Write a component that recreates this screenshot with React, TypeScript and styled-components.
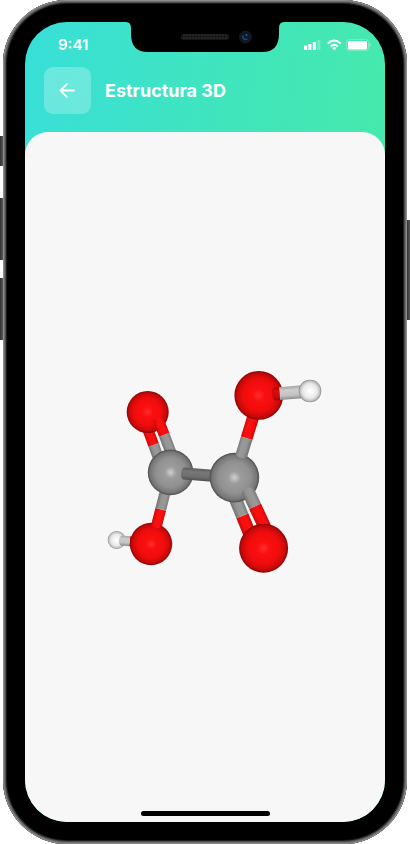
import React from "react";
import styled, { createGlobalStyle } from "styled-components";

const GlobalStyle = createGlobalStyle`
  * { box-sizing: border-box; }
  body { margin: 0; background: #ffffff; }
`;

const Page = styled.div`
  min-height: 100vh;
  padding: 0 3px;
  display: flex;
  font-family: Inter, "Open Sans", sans-serif;
`;

const Phone = styled.div`
  position: relative;
  flex: 1;
  display: flex;
  padding: 22px;
  border-radius: 64px;
  background: #000000;
  box-shadow:
    inset 0 0 0 1px #8c8c8c,
    inset 0 0 0 2px #6e6e6e,
    inset 0 0 0 3px #4c4c4c,
    inset 0 0 0 4px #1e1e1e;
`;

const SideKey = styled.span<{ $side: "left" | "right"; $top: number; $length: number }>`
  position: absolute;
  ${(p) => p.$side}: -3px;
  top: ${(p) => p.$top}px;
  width: 3px;
  height: ${(p) => p.$length}px;
  background: linear-gradient(90deg, #303030, #5c5c5c);
`;

const Screen = styled.div`
  position: relative;
  flex: 1;
  display: flex;
  flex-direction: column;
  overflow: hidden;
  border-radius: 42px;
  background: linear-gradient(97deg, #38dfd8 0%, #40e5bd 45%, #49eba4 100%);
`;

const Notch = styled.svg`
  position: absolute;
  top: 0;
  left: 50%;
  width: 158px;
  height: 30px;
  transform: translateX(-50%);
`;

const StatusBar = styled.div`
  height: 45px;
  padding: 0 14px 0 33px;
  display: flex;
  align-items: center;
  justify-content: space-between;
  color: #ffffff;
`;

const Clock = styled.time`
  font-size: 15px;
  line-height: 19px;
  font-weight: 600;
`;

const StatusIcons = styled.svg`
  width: 69px;
  height: 15px;
`;

const Header = styled.header`
  display: flex;
  align-items: center;
  gap: 14px;
  padding: 0 19px 18px;
`;

const BackButton = styled.button`
  width: 47px;
  height: 47px;
  padding: 0;
  display: flex;
  align-items: center;
  justify-content: center;
  border: 0;
  border-radius: 9px;
  background: rgba(255, 255, 255, 0.25);
  color: #ffffff;
  cursor: pointer;
`;

const Title = styled.h1`
  margin: 0;
  color: #ffffff;
  font-size: 18px;
  line-height: 23px;
  font-weight: 700;
`;

const Panel = styled.main`
  flex: 1;
  display: flex;
  flex-direction: column;
  align-items: center;
  padding-bottom: 6px;
  border-radius: 23px 23px 0 0;
  background: #f7f7f7;
`;

const Viewer = styled.div`
  flex: 1;
  display: flex;
  align-items: center;
  justify-content: center;
`;

const HomeIndicator = styled.div`
  width: 129px;
  height: 5px;
  border-radius: 3px;
  background: #000000;
`;

type Element = "O" | "C" | "H";
type Point = [number, number];

const shades: Record<Element, string[]> = {
  O: ["#ff3030", "#fb0f0f", "#f00c0c", "#c40909", "#860505"],
  C: ["#cfcfcf", "#9c9c9c", "#909090", "#757575", "#4c4c4c"],
  H: ["#ffffff", "#f8f8f8", "#e8e8e8", "#bababa", "#808080"],
};

const tubes: Record<string, string[]> = {
  O: ["#d00a0a", "#fc1010", "#f80e0e", "#c80909"],
  C: ["#7c7c7c", "#9a9a9a", "#939393", "#707070"],
  H: ["#a4a4a4", "#cecece", "#c2c2c2", "#8a8a8a"],
  Cdark: ["#5c5c5c", "#787878", "#6e6e6e", "#505050"],
  Odark: ["#a80707", "#dc0c0c", "#cc0a0a", "#920606"],
};

function Atom({ kind, at, r }: { kind: Element; at: Point; r: number }) {
  return <circle cx={at[0]} cy={at[1]} r={r} fill={`url(#atom-${kind})`} />;
}

interface BondProps {
  from: Point;
  to: Point;
  width: number;
  split?: number;
  first: string;
  second?: string;
  capStart?: boolean;
  capEnd?: boolean;
}

function Bond({ from, to, width, split = 1, first, second, capStart, capEnd }: BondProps) {
  const dx = to[0] - from[0];
  const dy = to[1] - from[1];
  const length = Math.hypot(dx, dy);
  const angle = (Math.atan2(dy, dx) * 180) / Math.PI;
  const mid = length * split;
  const h = width / 2;
  const start = capStart ? `A 3 ${h} 0 0 1 0 ${-h}` : "Z";
  const end = capEnd ? `A 3 ${h} 0 0 1 ${length} ${h}` : `V ${h}`;
  return (
    <g transform={`translate(${from[0]} ${from[1]}) rotate(${angle})`}>
      {second && (
        <path d={`M ${mid} ${-h} H ${length} ${end} H ${mid} Z`} fill={`url(#tube-${second})`} />
      )}
      <path d={`M 0 ${-h} H ${mid} V ${h} H 0 ${start}`} fill={`url(#tube-${first})`} />
    </g>
  );
}

function Molecule() {
  return (
    <svg width="240" height="209" viewBox="85 367 240 209" role="img" aria-label="Ácido oxálico">
      <defs>
        {(Object.keys(shades) as Element[]).map((k) => (
          <radialGradient key={k} id={`atom-${k}`}>
            <stop offset="0" stopColor={shades[k][0]} />
            <stop offset="0.25" stopColor={shades[k][1]} />
            <stop offset="0.65" stopColor={shades[k][2]} />
            <stop offset="0.9" stopColor={shades[k][3]} />
            <stop offset="1" stopColor={shades[k][4]} />
          </radialGradient>
        ))}
        {Object.keys(tubes).map((k) => (
          <linearGradient key={k} id={`tube-${k}`} x1="0" y1="0" x2="0" y2="1">
            <stop offset="0" stopColor={tubes[k][0]} />
            <stop offset="0.3" stopColor={tubes[k][1]} />
            <stop offset="0.7" stopColor={tubes[k][2]} />
            <stop offset="1" stopColor={tubes[k][3]} />
          </linearGradient>
        ))}
      </defs>

      <Bond from={[147, 427]} to={[161, 465]} width={11} split={0.47} first="O" second="C" />
      <Atom kind="O" at={[147.7, 412]} r={21} />
      <Bond from={[158.5, 420]} to={[173, 458]} width={11} split={0.39} first="O" second="C" capStart />
      <Atom kind="H" at={[116.7, 540]} r={9} />
      <Bond from={[122, 540.5]} to={[136, 542]} width={10} split={0.55} first="H" second="Odark" capStart />
      <Atom kind="O" at={[151, 544]} r={21.2} />
      <Bond from={[167, 485]} to={[156.7, 525]} width={11} split={0.61} first="C" second="O" capEnd />
      <Atom kind="C" at={[170.6, 472.4]} r={22.8} />
      <Bond from={[184, 473.5]} to={[216, 476]} width={12} first="Cdark" capStart />

      <Bond from={[233, 493]} to={[251, 537]} width={13} split={0.52} first="C" second="O" />
      <Atom kind="C" at={[234.4, 477.6]} r={24.8} />
      <Bond from={[241.5, 455]} to={[255, 411]} width={12} split={0.38} first="C" second="O" capStart />
      <Bond from={[248, 491]} to={[267, 532]} width={13} split={0.37} first="C" second="O" capStart />
      <Atom kind="O" at={[263.6, 548.2]} r={24.5} />
      <Atom kind="O" at={[258.8, 395.4]} r={24.4} />
      <Bond from={[275, 394]} to={[305, 391.6]} width={13} split={0.15} first="Odark" second="H" capStart />
      <Atom kind="H" at={[310, 391]} r={11.3} />
    </svg>
  );
}

export default function App() {
  return (
    <Page>
      <GlobalStyle />
      <Phone>
        <SideKey $side="left" $top={136} $length={30} />
        <SideKey $side="left" $top={198} $length={62} />
        <SideKey $side="left" $top={278} $length={62} />
        <SideKey $side="right" $top={220} $length={100} />
        <Screen>
          <Notch viewBox="0 0 158 30" aria-hidden="true">
            <defs>
              <pattern id="mesh" width="3" height="3" patternUnits="userSpaceOnUse">
                <rect width="3" height="3" fill="#161616" />
                <circle cx="1" cy="1" r="0.8" fill="#3a3a3a" />
              </pattern>
            </defs>
            <path d="M0 0 Q5 0 5 6 V12 Q5 30 22 30 H136 Q153 30 153 12 V6 Q153 0 158 0 Z" fill="#000" />
            <rect x="55" y="12" width="48" height="6" rx="3" fill="url(#mesh)" />
            <circle cx="119.5" cy="15" r="6.5" fill="#15171b" />
            <circle cx="119.5" cy="15" r="4" fill="#0a1a30" />
            <path d="M117 13.5 A3 3 0 0 0 121.5 17" fill="none" stroke="#1a487a" strokeWidth="1.5" />
            <circle cx="120.5" cy="13" r="1" fill="#2a5d94" />
          </Notch>
          <StatusBar>
            <Clock>9:41</Clock>
            <StatusIcons viewBox="0 0 69 15" fill="currentColor" aria-hidden="true">
              <rect x="2" y="8.5" width="3.2" height="4.5" rx="0.5" />
              <rect x="6.3" y="7" width="3.2" height="6" rx="0.5" />
              <rect x="10.8" y="5" width="3.2" height="8" rx="0.5" />
              <rect x="15.2" y="3" width="3.2" height="10" rx="0.5" opacity="0.25" />
              <g fill="none" stroke="currentColor" strokeWidth="2">
                <path d="M25.7 6.5 Q32.2 0.5 38.7 6.5" />
                <path d="M28.5 9.5 Q32.2 6.2 35.9 9.5" />
              </g>
              <path d="M30 11 Q32.2 9.2 34.4 11 L32.2 13.2 Z" />
              <rect x="44.5" y="2.5" width="22" height="11" rx="2.5" fill="none" stroke="currentColor" opacity="0.25" />
              <rect x="46" y="4" width="19" height="8.5" rx="1" />
              <rect x="67.5" y="6" width="1" height="4" opacity="0.4" />
            </StatusIcons>
          </StatusBar>
          <Header>
            <BackButton type="button" aria-label="Volver">
              <svg width="17" height="17" viewBox="0 0 17 17" fill="none" stroke="currentColor" strokeWidth="1.8" strokeLinecap="round" strokeLinejoin="round">
                <path d="M15 8.500 H1.500 M7.800 2.200 L1.500 8.500 L7.800 14.800" />
              </svg>
            </BackButton>
            <Title>Estructura 3D</Title>
          </Header>
          <Panel>
            <Viewer>
              <Molecule />
            </Viewer>
            <HomeIndicator />
          </Panel>
        </Screen>
      </Phone>
    </Page>
  );
}
